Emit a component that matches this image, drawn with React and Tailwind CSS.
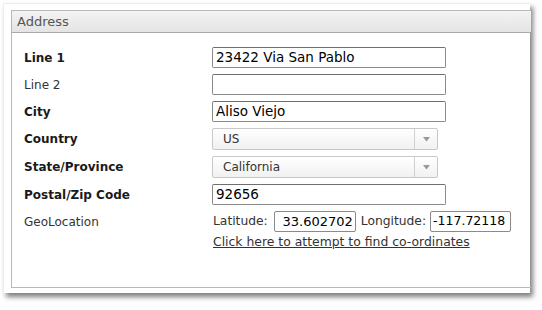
export default function App() {
  const font = { fontFamily: '"DejaVu Sans", Verdana, sans-serif' };
  const labelB = "text-[12px] font-bold text-[#1a1a1a] h-[21px] flex items-center";
  const labelR = "text-[12px] text-[#333] h-[21px] flex items-center";
  const input =
    "w-[234px] h-[21px] border border-[#8a8a8a] border-t-[#6f6f6f] rounded-[2px] bg-white text-[13.5px] text-black pl-[3px] flex items-center whitespace-nowrap";
  const select =
    "w-[226px] h-[22px] border border-[#c8c8c8] rounded-[2px] bg-gradient-to-b from-white to-[#f1f1f1] flex items-stretch text-[12px] text-[#333]";
  return (
    <div className="w-[542px] h-[310px] bg-white pt-[3px] pl-[3px]" style={font}>
      <div className="w-[527px] h-[290px] bg-white border-t border-l border-[#ededed] shadow-[3px_4px_5px_rgba(0,0,0,0.5)] pt-[6px] pl-[7px]">
        <div className="w-[520px] h-[278px] border-l border-t border-b border-[#b8b8b8]">
          <div className="h-[22px] bg-gradient-to-b from-[#f3f3f3] to-[#e4e4e4] border-b border-[#a9a9a9] pl-[5px] flex items-center text-[13px] text-[#555]">
            Address
          </div>
          <div className="pl-[12px] pt-[14px] grid grid-cols-[188px_1fr] gap-y-[6px]">
            <div className={labelB}>Line 1</div>
            <div className={input}>23422 Via San Pablo</div>

            <div className={labelR}>Line 2</div>
            <div className={input}></div>

            <div className={labelB}>City</div>
            <div className={input}>Aliso Viejo</div>

            <div className={labelB + " !h-[22px]"}>Country</div>
            <div className={select}>
              <div className="flex-1 pl-[10px] flex items-center">US</div>
              <div className="w-[23px] border-l border-[#d0d0d0] flex items-center justify-center">
                <svg width="7" height="5" viewBox="0 0 7 5">
                  <path d="M0 0 L7 0 L3.5 4.5 Z" fill="#9a9a9a" />
                </svg>
              </div>
            </div>

            <div className={labelB + " !h-[22px]"}>State/Province</div>
            <div className={select}>
              <div className="flex-1 pl-[10px] flex items-center">California</div>
              <div className="w-[23px] border-l border-[#d0d0d0] flex items-center justify-center">
                <svg width="7" height="5" viewBox="0 0 7 5">
                  <path d="M0 0 L7 0 L3.5 4.5 Z" fill="#9a9a9a" />
                </svg>
              </div>
            </div>

            <div className={labelB}>Postal/Zip Code</div>
            <div className={input}>92656</div>

            <div className={labelR + " self-start"}>GeoLocation</div>
            <div className="flex flex-col">
              <div className="flex items-center h-[21px] text-[12.3px] text-[#333]">
                <span className="ml-[1px]">Latitude:</span>
                <div className="ml-[6px] w-[82px] h-[21px] border border-[#8a8a8a] rounded-[2px] text-black text-[13px] flex items-center justify-end pr-[2px]">
                  33.602702
                </div>
                <span className="ml-[5px]">Longitude:</span>
                <div className="ml-[4px] w-[81px] h-[21px] border border-[#8a8a8a] rounded-[2px] text-black text-[12.5px] flex items-center pl-[2px] overflow-hidden whitespace-nowrap">
                  -117.72118
                </div>
              </div>
              <a className="text-[12.4px] text-[#333] underline leading-[15px] mt-[2px] ml-[1px]" href="#">
                Click here to attempt to find co-ordinates
              </a>
            </div>
          </div>
        </div>
      </div>
    </div>
  );
}
